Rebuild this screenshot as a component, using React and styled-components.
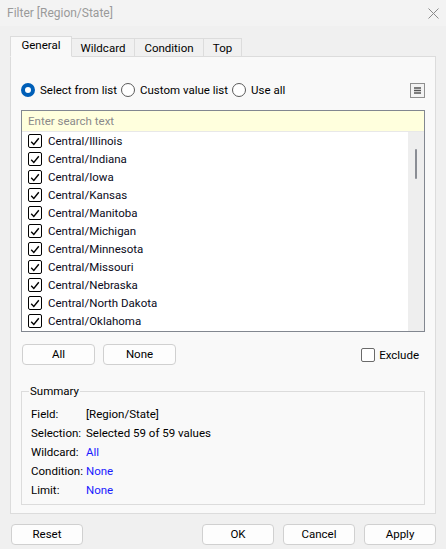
import React from 'react';
import styled, { createGlobalStyle } from 'styled-components';

const GlobalStyle = createGlobalStyle`
  html, body {
    margin: 0;
    padding: 0;
    background: #f0f0f0;
  }
  body {
    font-family: Roboto, "Open Sans", sans-serif;
    font-size: 11.5px;
    color: #1a1a1a;
  }
`;

const Window = styled.div`
  width: 446px;
  height: 549px;
  display: flex;
  flex-direction: column;
  background: #f0f0f0;
  overflow: hidden;
`;

const TitleBar = styled.div`
  height: 26px;
  display: flex;
  align-items: center;
  justify-content: space-between;
  padding: 0 7px;
  background: #f3f3f3;
  color: #9a9a9a;
  font-size: 12px;
`;

const Body = styled.div`
  padding: 11px 10px 0 10px;
  display: flex;
  flex-direction: column;
`;

const Tabs = styled.div`
  display: flex;
  align-items: flex-end;
  height: 20px;
  position: relative;
  z-index: 1;
  margin-bottom: -1px;
`;

const Tab = styled.div`
  width: ${p => p.$w}px;
  height: ${p => (p.$active ? '21px' : '19px')};
  display: flex;
  align-items: center;
  justify-content: center;
  box-sizing: border-box;
  border: 1px solid #dcdcdc;
  border-bottom: ${p => (p.$active ? '1px solid #f9f9f9' : '1px solid #dcdcdc')};
  border-left: ${p => (p.$first || p.$active ? '1px solid #dcdcdc' : 'none')};
  background: ${p => (p.$active ? '#f9f9f9' : '#f0f0f0')};
  color: #000;
  padding-bottom: ${p => (p.$active ? '3px' : '0')};
`;

const Panel = styled.div`
  height: 458px;
  box-sizing: border-box;
  border: 1px solid #dcdcdc;
  background: #f9f9f9;
  padding: 0 10px;
  display: flex;
  flex-direction: column;
`;

const RadioRow = styled.div`
  display: flex;
  align-items: center;
  height: 20px;
  margin-top: 23px;
`;

const RadioLabel = styled.label`
  display: flex;
  align-items: center;
  gap: 5px;
  margin-right: 4px;
  color: #000;
`;

const Radio = styled.span`
  width: 14px;
  height: 14px;
  box-sizing: border-box;
  border-radius: 50%;
  border: ${p => (p.$on ? '4px solid #005fb8' : '1px solid #5a5a5a')};
  background: #fff;
  display: inline-block;
`;

const MenuButton = styled.div`
  margin-left: auto;
  width: 15px;
  height: 15px;
  box-sizing: border-box;
  border: 1px solid #8f8f8f;
  background: #f3f3f3;
  display: flex;
  align-items: center;
  justify-content: center;
`;

const ListBox = styled.div`
  margin-top: 10px;
  height: 222px;
  box-sizing: border-box;
  border: 1px solid #828790;
  background: #fff;
  display: flex;
  flex-direction: column;
  overflow: hidden;
`;

const Search = styled.div`
  height: 21px;
  flex: none;
  box-sizing: border-box;
  background: #ffffdd;
  border-bottom: 1px solid #e8e8e8;
  color: #8a8a8a;
  padding: 0 6px;
  display: flex;
  align-items: center;
`;

const ListArea = styled.div`
  flex: 1;
  display: flex;
  overflow: hidden;
`;

const Items = styled.div`
  flex: 1;
  overflow: hidden;
`;

const Item = styled.div`
  height: 18px;
  display: flex;
  align-items: center;
  padding-left: 6px;
  gap: 6px;
  color: #0a0a20;
`;

const Check = styled.span`
  width: 14px;
  height: 14px;
  box-sizing: border-box;
  border: 1px solid ${p => (p.$on ? '#000' : '#6a6a6a')};
  border-radius: 2px;
  background: #fff;
  display: flex;
  align-items: center;
  justify-content: center;
`;

const ScrollTrack = styled.div`
  width: 16px;
  background: #eeeeee;
  display: flex;
  justify-content: center;
  padding-top: 17px;
`;

const Thumb = styled.div`
  width: 2px;
  height: 30px;
  border-radius: 1px;
  background: #8a8d94;
`;

const ButtonRow = styled.div`
  display: flex;
  align-items: center;
  margin-top: 12px;
  gap: 8px;
  padding-left: 1px;
`;

const Button = styled.div`
  width: ${p => p.$w || 73}px;
  height: 21px;
  box-sizing: border-box;
  border: 1px solid #d0d0d0;
  border-radius: 4px;
  background: #fdfdfd;
  display: flex;
  align-items: center;
  justify-content: center;
  color: #000;
  line-height: 1;
`;

const Exclude = styled.label`
  margin-left: auto;
  display: flex;
  align-items: center;
  gap: 4px;
  margin-right: 6px;
  color: #000;
`;

const Fieldset = styled.fieldset`
  margin: 19px 0 0 0;
  padding: 6px 9px 5px 9px;
  border: 1px solid #dcdcdc;
  display: flex;
  flex-direction: column;
  legend {
    padding: 0 1px;
    margin-left: -2px;
    color: #000;
  }
`;

const SummaryRow = styled.div`
  display: flex;
  height: 19px;
  align-items: center;
`;

const Key = styled.span`
  width: 55px;
  flex: none;
  color: #000;
`;

const Value = styled.span`
  color: ${p => (p.$link ? '#1a1aff' : '#000')};
`;

const Footer = styled.div`
  display: flex;
  padding: 10px 10px 0 11px;
  gap: 9px;
`;

const Spacer = styled.span`
  flex: 1;
`;

const states = [
  'Illinois', 'Indiana', 'Iowa', 'Kansas', 'Manitoba', 'Michigan',
  'Minnesota', 'Missouri', 'Nebraska', 'North Dakota', 'Oklahoma',
];

const CheckMark = () => (
  <svg width="10" height="9" viewBox="0 0 10 9">
    <path d="M1.2 4.8 L3.8 7.4 L8.8 1.2" fill="none" stroke="#000" strokeWidth="1.4" />
  </svg>
);

export default function App() {
  return (
    <>
      <GlobalStyle />
      <Window>
        <TitleBar>
          <span>Filter [Region/State]</span>
          <svg width="11" height="11" viewBox="0 0 11 11">
            <path d="M0.5 0.5 L10.5 10.5 M10.5 0.5 L0.5 10.5" stroke="#8a8a8a" strokeWidth="1" />
          </svg>
        </TitleBar>
        <Body>
          <Tabs>
            <Tab $active $first $w={62}>General</Tab>
            <Tab $w={63}>Wildcard</Tab>
            <Tab $w={69}>Condition</Tab>
            <Tab $w={38}>Top</Tab>
          </Tabs>
          <Panel>
            <RadioRow>
              <RadioLabel><Radio $on />Select from list</RadioLabel>
              <RadioLabel><Radio />Custom value list</RadioLabel>
              <RadioLabel><Radio />Use all</RadioLabel>
              <MenuButton>
                <svg width="7" height="7" viewBox="0 0 7 7">
                  <path d="M0 1 H7 M0 3.5 H7 M0 6 H7" stroke="#555" strokeWidth="1.4" />
                </svg>
              </MenuButton>
            </RadioRow>
            <ListBox>
              <Search>Enter search text</Search>
              <ListArea>
                <Items>
                  {states.map(s => (
                    <Item key={s}>
                      <Check $on><CheckMark /></Check>
                      <span>Central/{s}</span>
                    </Item>
                  ))}
                </Items>
                <ScrollTrack><Thumb /></ScrollTrack>
              </ListArea>
            </ListBox>
            <ButtonRow>
              <Button>All</Button>
              <Button>None</Button>
              <Exclude><Check />Exclude</Exclude>
            </ButtonRow>
            <Fieldset>
              <legend>Summary</legend>
              <SummaryRow><Key>Field:</Key><Value>[Region/State]</Value></SummaryRow>
              <SummaryRow><Key>Selection:</Key><Value>Selected 59 of 59 values</Value></SummaryRow>
              <SummaryRow><Key>Wildcard:</Key><Value $link>All</Value></SummaryRow>
              <SummaryRow><Key>Condition:</Key><Value $link>None</Value></SummaryRow>
              <SummaryRow><Key>Limit:</Key><Value $link>None</Value></SummaryRow>
            </Fieldset>
          </Panel>
        </Body>
        <Footer>
          <Button $w={72}>Reset</Button>
          <Spacer />
          <Button $w={72}>OK</Button>
          <Button $w={72}>Cancel</Button>
          <Button $w={72}>Apply</Button>
        </Footer>
      </Window>
    </>
  );
}
